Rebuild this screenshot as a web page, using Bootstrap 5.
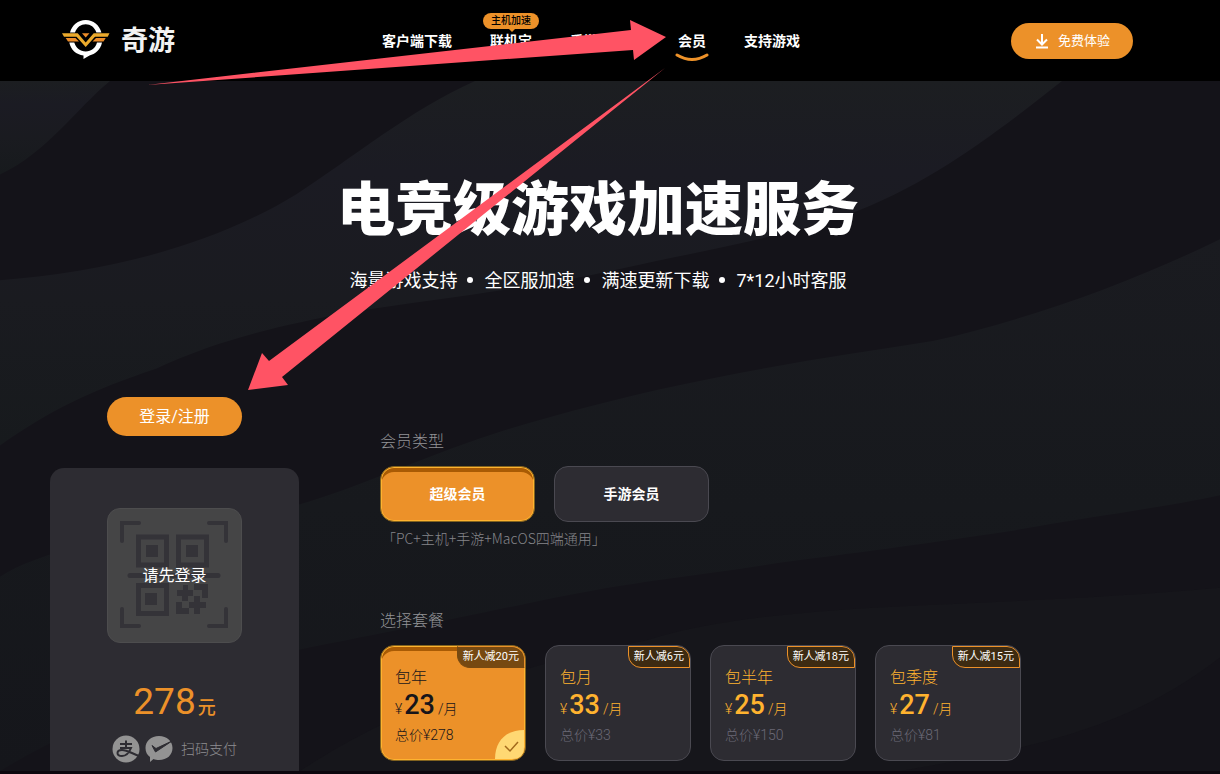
<!DOCTYPE html>
<html lang="zh-CN">
<head>
<meta charset="utf-8">
<meta name="viewport" content="width=device-width, initial-scale=1">
<title>奇游 - 会员</title>
<link href="https://cdn.jsdelivr.net/npm/bootstrap@5.3.0/dist/css/bootstrap.min.css" rel="stylesheet">
<style>
  :root { --amber: #ec9129; --gold: #ffb32f; --panel: #2d2c32; --line: #4a4951; }
  body { background: #141319; color: #fff; font-family: Roboto, "Noto Sans CJK SC", sans-serif; font-size: 14px; line-height: 20px; }
  .site-header { background: #000; height: 81px; padding: 0 87px 0 62px; }
  .brand-name { font: 700 27px/36px "Noto Sans CJK SC", sans-serif; color: #f2f2f2; padding-bottom: 4px; }
  .site-menu { gap: 38px; margin-left: 207px; }
  .site-menu a { color: #fff; font-weight: 700; position: relative; text-decoration: none; white-space: nowrap; }
  .menu-tag { position: absolute; left: 50%; bottom: 22px; transform: translateX(-50%); background: var(--amber); color: #000; border-radius: 8px; font-size: 10px; font-weight: 500; line-height: 16px; width: 56px; text-align: center; }
  .menu-tag::after { content: ""; position: absolute; left: 26px; top: 16px; border: 3px solid transparent; border-top-color: var(--amber); border-bottom: 0; }
  .menu-mark { position: absolute; left: -3px; top: 22px; }
  .pill { background: var(--amber); color: #fff; border: 0; border-radius: 20px; --bs-btn-hover-bg: #f7a03c; --bs-btn-hover-color: #fff; }
  .pill-try { width: 122px; height: 36px; font-size: 13px; padding: 0; }
  .pill-login { width: 135px; height: 39px; font-size: 16px; padding: 0; }
  .stage { min-height: calc(100vh - 81px); padding: 0 74px 0 50px; border-bottom: 3px solid #0c070e; }
  .waves { position: absolute; inset: 0; width: 100%; height: 100%; }
  .hero { padding-top: 93px; }
  .hero h1 { font-size: 58px; font-weight: 900; line-height: 72px; margin: 0 0 22px; }
  .hero ul { font-size: 18px; line-height: 26px; font-weight: 400; font-family: Roboto, "Noto Sans CJK SC", sans-serif; }
  .hero li + li::before { content: ""; display: inline-block; width: 6px; height: 6px; border-radius: 50%; background: #fff; margin: 0 11px 4px 10px; }
  .purchase { gap: 81px; padding-top: 103px; }
  .account { flex: 0 0 249px; }
  .pay-panel { background: var(--panel); border-radius: 14px 14px 0 0; margin-top: 32px; padding-top: 40px; }
  .qr-box { width: 135px; height: 135px; background: #454546; border: 1px solid #4d4d4e; border-radius: 13px; overflow: hidden; }
  .qr-box span { position: absolute; inset: 0; display: flex; align-items: center; justify-content: center; font-size: 16px; }
  .price { color: var(--amber); margin-top: 36px; line-height: 46px; font-size: 37px; font-weight: 400; }
  .price small { font-size: 18px; font-weight: 500; margin-left: 2px; }
  .pay-way { color: #8e8e91; font-weight: 300; margin-top: 4px; margin-bottom: 8px; }
  .options { padding-top: 34px; }
  .field-name { font-size: 16px; line-height: 22px; font-weight: 300; color: #929296; margin: 0 0 13px; float: none; }
  .choices { gap: 19px; }
  .choice { background: var(--panel); border: 1px solid var(--line); border-radius: 14px; color: #fff; cursor: pointer; position: relative; }
  .kind { width: 155px; height: 56px; font-size: 14px; font-weight: 700; }
  .btn-check:checked + .choice { background: var(--amber); border-color: #81621f; box-shadow: inset 0 0 0 1px var(--gold), inset 0 5px 0 #a95b04; }
  .btn-check:focus-visible + .choice { outline: 2px solid #fff; }
  .note { color: #85858a; font-weight: 300; font-family: "Noto Sans CJK SC", sans-serif; margin: 6px 0 62px 2px; }
  .plan { width: 146px; height: 116px; padding: 22px 14px 0; color: var(--gold); overflow: hidden; }
  .plan-name { font-size: 16px; line-height: 20px; font-weight: 300; }
  .plan-price { line-height: 34px; font-weight: 300; }
  .plan-price b { font-size: 27px; font-weight: 500; margin: 0 3px 0 2px; }
  .plan-total { font-weight: 300; color: #6b6976; line-height: 18px; }
  .plan-cut { position: absolute; top: 0; right: 0; background: #3d2b12; border: 1px solid var(--amber); border-radius: 0 13px 0 13px; color: #fff; font-size: 11px; line-height: 20px; padding: 0 5px; }
  .plan-tick { position: absolute; right: 1px; bottom: 1px; display: none; }
  .btn-check:checked + .plan, .btn-check:checked + .plan .plan-total { color: #17151a; }
  .btn-check:checked + .plan .plan-cut { background: #764911; border-color: var(--amber) var(--amber) #764911 #764911; }
  .btn-check:checked + .plan .plan-tick { display: block; }
  .pointers { position: absolute; left: 0; top: 0; pointer-events: none; z-index: 5; }
</style>
</head>
<body class="position-relative">

<header class="site-header d-flex align-items-center">
  <a href="#" class="d-flex align-items-center text-decoration-none" style="gap:11px">
    <svg width="48" height="42" viewBox="0 0 48 42" aria-hidden="true">
      <path d="M8 12.500C10 5 16 0 23.700 0s13.700 5 15.700 12.500h-5C32.500 7 28.500 4.200 23.700 4.200S15 7 13 12.500z" fill="#fff"/>
      <path d="M7.300 22.500h5C14 28 18 31.500 23.700 31.500S33.500 28 35 22.500h5C38.500 30 33 34 27.500 35.500L21.500 39V35.500C14 34.500 9 30 7.300 22.500z" fill="#fff"/>
      <path d="M0 13.300H15.700L23.700 22.500 31.700 13.300H47.500L45.700 16.800H33L23.700 27 14.500 16.800H2z" fill="#ebaa2c"/>
      <path d="M3.700 18H13.500L17 21.500H6zM43.700 18H34L30.500 21.500H41.500zM20 13.300H27.500L23.700 17.500z" fill="#ed8c28"/>
    </svg>
    <span class="brand-name">奇游</span>
  </a>
  <nav class="site-menu d-flex">
    <a href="#">客户端下载</a>
    <a href="#">联机宝<span class="menu-tag">主机加速</span></a>
    <a href="#">手游加速器</a>
    <a href="#" aria-current="page">会员<svg class="menu-mark" width="34" height="9" viewBox="0 0 34 9" aria-hidden="true"><path d="M2 2q15 9 30 0" fill="none" stroke="#ee9229" stroke-width="3" stroke-linecap="round"/></svg></a>
    <a href="#">支持游戏</a>
  </nav>
  <button type="button" class="btn pill pill-try ms-auto d-flex align-items-center justify-content-center gap-2">
    <svg width="16" height="16" viewBox="0 0 16 16" fill="none" stroke="#fff" stroke-width="2" aria-hidden="true"><path d="M8 1v10M3 6.500l5 5 5-5M2 14.500h12"/></svg>
    免费体验
  </button>
</header>

<main class="stage position-relative d-flex flex-column">
  <svg class="waves" viewBox="0 81 1220 693" preserveAspectRatio="none" aria-hidden="true">
    <defs>
      <linearGradient id="haze" x1="0" y1="0" x2="0" y2="1"><stop offset="0" stop-color="#1c1e21"/><stop offset=".25" stop-color="#1b1b23"/><stop offset=".6" stop-color="#1a1b20"/><stop offset="1" stop-color="#171a1d"/></linearGradient>
      <linearGradient id="haze2" x1="0" y1="0" x2="0" y2="1"><stop offset="0" stop-color="#1a1b20"/><stop offset=".5" stop-color="#17191d"/><stop offset="1" stop-color="#15161b"/></linearGradient>
    </defs>
    <path fill="url(#haze)" d="M0 81H110C75 110 48 152 0 175z"/>
    <path fill="url(#haze)" d="M475 81C410 110 350 160 296 195C210 248 100 274 0 281V447C50 412 90 392 156 370C220 340 280 327 350 313C450 298 540 288 623 269C710 250 780 238 848 215C930 185 1000 130 1062 81z"/>
    <path fill="url(#haze2)" d="M1220 240C1130 284 1030 320 934 342C820 360 690 378 545 420C450 445 360 490 300 506C200 528 60 540 0 579V774C90 720 180 690 300 652C400 632 460 620 545 602C640 582 700 578 778 565C880 552 930 545 1011 533C1080 520 1160 510 1220 497z"/>
    <path fill="#16161b" d="M1220 590C1090 602 960 605 856 611C780 616 700 625 646 643C500 670 380 720 300 774H900C1040 750 1130 730 1220 660z"/>
  </svg>

  <section class="hero position-relative text-center">
    <h1>电竞级游戏加速服务</h1>
    <ul class="list-unstyled d-flex flex-wrap justify-content-center mb-0">
      <li>海量游戏支持</li><li>全区服加速</li><li>满速更新下载</li><li>7*12小时客服</li>
    </ul>
  </section>

  <div class="purchase d-flex flex-grow-1 position-relative">
    <aside class="account d-flex flex-column align-items-stretch">
      <button type="button" class="btn pill pill-login mx-auto">登录/注册</button>
      <div class="pay-panel flex-grow-1 d-flex flex-column align-items-center">
        <div class="qr-box position-relative">
          <svg class="d-block" width="133" height="133" viewBox="1 1 133 133" aria-hidden="true">
            <g fill="none" stroke="#343338" stroke-width="4">
              <path stroke-linecap="round" d="M15 33V15H32M102 15h17v18M15 101v17H32M102 118h17v-17"/>
              <path stroke-width="5" stroke-linecap="round" d="M23 67.500h88"/>
              <path stroke-width="5" d="M31.500 29h28v28h-28zM71.500 29h28v28h-28zM31.500 77.500h28v28h-28z"/>
            </g>
            <path fill="#343338" d="M39 37h12v12H39zM79 37h12v12H79zM38 85h12v12H38zM76 77h5v5h5v6h-5v5h-6v-5h-5v-6h6zM87 76h14v14h-6v-8h-8zM87 88h6v6h6v6h-6v6h-6v-6h-5v-6h5zM69 94h6v6h7v6H69z"/>
          </svg>
          <span>请先登录</span>
        </div>
        <div class="price">278<small>元</small></div>
        <div class="pay-way d-flex align-items-center">
          <svg width="61" height="28" viewBox="0 0 61 28" aria-hidden="true">
            <circle cx="14" cy="14" r="13.500" fill="#939393"/>
            <path d="M8 9h12M14 5.500V13M8 13h11c-2 5-5 8-9 8-6 0-6-6 0-6 5 0 9 3 17 6" fill="none" stroke="#2d2c32" stroke-width="2"/>
            <path d="M47 1c8 0 13.500 5 13.500 12S55 25 47 25c-2 0-4-.3-5.500-1L38 27v-5c-3-2-4.500-5-4.500-9C33.500 6 39 1 47 1z" fill="#939393"/>
            <path d="M40 10.500l4 3L60 6 43.500 17z" fill="#2d2c32" stroke="#2d2c32"/>
          </svg>
          <span class="ms-2">扫码支付</span>
        </div>
      </div>
    </aside>

    <form class="options flex-grow-1">
      <fieldset>
        <legend class="field-name">会员类型</legend>
        <div class="choices d-flex flex-wrap">
          <div><input class="btn-check" type="radio" name="kind" id="kind-super" checked><label class="choice kind d-flex align-items-center justify-content-center" for="kind-super">超级会员</label></div>
          <div><input class="btn-check" type="radio" name="kind" id="kind-mobile"><label class="choice kind d-flex align-items-center justify-content-center" for="kind-mobile">手游会员</label></div>
        </div>
      </fieldset>
      <p class="note">「PC+主机+手游+MacOS四端通用」</p>
      <fieldset>
        <legend class="field-name">选择套餐</legend>
        <div class="choices d-flex flex-wrap">
          <div><input class="btn-check" type="radio" name="plan" id="plan-year" checked><label class="choice plan d-block" for="plan-year">
            <span class="plan-cut">新人减20元</span>
            <span class="plan-name d-block">包年</span><span class="plan-price d-block">¥<b>23</b>/月</span><span class="plan-total d-block">总价¥278</span>
            <svg class="plan-tick" width="29" height="29" viewBox="0 0 29 29" aria-hidden="true"><path d="M0 29C0 11 11 0 29 0V17q0 12-12 12z" fill="#ffd873"/><path d="M10 16l5 5 8-9" fill="none" stroke="#a36a1c" stroke-width="1.500"/></svg>
          </label></div>
          <div><input class="btn-check" type="radio" name="plan" id="plan-month"><label class="choice plan d-block" for="plan-month">
            <span class="plan-cut">新人减6元</span>
            <span class="plan-name d-block">包月</span><span class="plan-price d-block">¥<b>33</b>/月</span><span class="plan-total d-block">总价¥33</span>
          </label></div>
          <div><input class="btn-check" type="radio" name="plan" id="plan-half"><label class="choice plan d-block" for="plan-half">
            <span class="plan-cut">新人减18元</span>
            <span class="plan-name d-block">包半年</span><span class="plan-price d-block">¥<b>25</b>/月</span><span class="plan-total d-block">总价¥150</span>
          </label></div>
          <div><input class="btn-check" type="radio" name="plan" id="plan-season"><label class="choice plan d-block" for="plan-season">
            <span class="plan-cut">新人减15元</span>
            <span class="plan-name d-block">包季度</span><span class="plan-price d-block">¥<b>27</b>/月</span><span class="plan-total d-block">总价¥81</span>
          </label></div>
        </div>
      </fieldset>
    </form>
  </div>
</main>

<!-- Guide arrows: to the membership link, then to the login button -->
<svg class="pointers" width="680" height="400" viewBox="0 0 680 400" fill="#ff5364" aria-hidden="true">
  <path d="M147 85L631 30 630 20 666 37 634 60 633 50z"/>
  <path d="M665 68L269 361 262 353 248 390 288 385 282 377z"/>
</svg>

<script src="https://cdn.jsdelivr.net/npm/bootstrap@5.3.0/dist/js/bootstrap.bundle.min.js"></script>
</body>
</html>
